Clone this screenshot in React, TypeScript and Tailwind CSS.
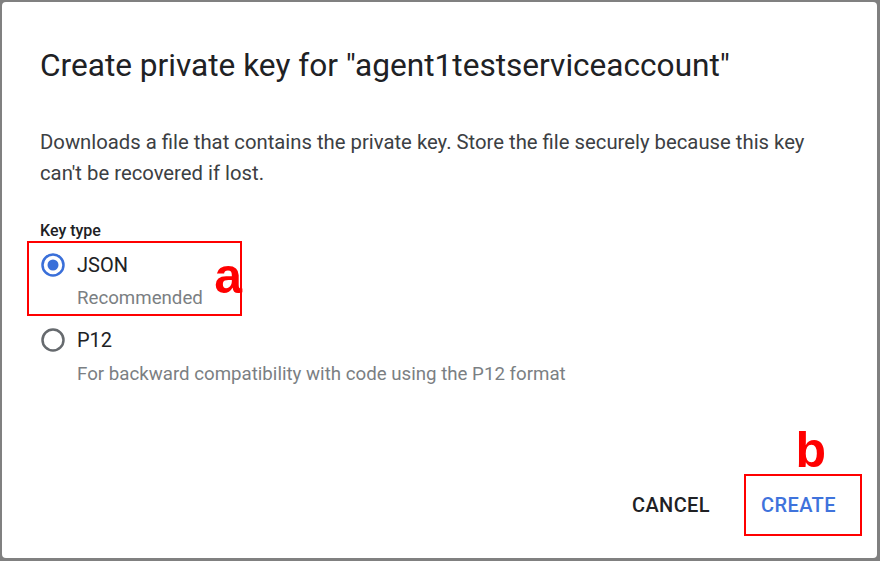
const Radio = ({ checked }: { checked?: boolean }) => (
  <svg width="24" height="24" viewBox="0 0 24 24" className="shrink-0">
    <circle
      cx="12"
      cy="12"
      r="10.5"
      fill="none"
      stroke={checked ? '#3a6fd9' : '#666a6e'}
      strokeWidth="2.5"
    />
    {checked && <circle cx="12" cy="12" r="5.5" fill="#3a6fd9" />}
  </svg>
);

export default function App() {
  return (
    <div className="w-[880px] h-[561px] bg-[#808080] pl-[2px] pt-[2px] pr-[3px] pb-[3px] font-['Roboto',sans-serif]">
      <div className="h-full bg-white rounded-[4px] px-[38px] pt-[46px] flex flex-col">
        <h1 className="text-[31.6px] leading-[36px] text-[#202124]">
          Create private key for "agent1testserviceaccount"
        </h1>

        <p className="mt-[43px] max-w-[790px] text-[20.3px] leading-[31px] text-[#3c4043]">
          Downloads a file that contains the private key. Store the file securely because this key
          can't be recovered if lost.
        </p>

        <div className="mt-[32px] text-[16px] leading-[20px] font-medium text-[#202124]">Key type</div>

        {/* option a */}
        <div className="relative -ml-[13px] w-[215px] h-[75px] border-2 border-[#ff0000] pl-[12px] pt-[10px]">
          <div className="flex items-center gap-[12px]">
            <Radio checked />
            <span className="text-[20px] leading-[24px] text-[#202124]">JSON</span>
          </div>
          <div className="ml-[36px] mt-[10px] text-[18.7px] leading-[22px] text-[#7b7f83]">Recommended</div>
          <span className="absolute -right-[2px] top-[8px] text-[50px] leading-[50px] font-bold text-[#ff0000] font-['Liberation_Sans',sans-serif]">
            a
          </span>
        </div>

        <div className="mt-[12px] flex items-center gap-[12px] ml-px">
          <Radio />
          <span className="text-[20px] leading-[24px] text-[#202124]">P12</span>
        </div>
        <div className="ml-[37px] mt-[11px] text-[18.7px] leading-[22px] text-[#7b7f83]">
          For backward compatibility with code using the P12 format
        </div>

        <div className="mt-auto mb-[22px] flex justify-end items-center -mr-[23px]">
          <button className="text-[20px] leading-[24px] font-medium tracking-[0.02em] text-[#202124] mr-[34px]">
            CANCEL
          </button>
          <div className="relative">
            <span className="absolute right-[36px] -top-[49px] text-[50px] leading-[50px] font-bold text-[#ff0000] font-['Liberation_Sans',sans-serif]">
              b
            </span>
            <button className="w-[118px] h-[62px] border-2 border-[#ff0000] pl-[15px] text-left text-[20px] leading-[24px] font-medium tracking-[0.02em] text-[#3f73dc]">
              CREATE
            </button>
          </div>
        </div>
      </div>
    </div>
  );
}
